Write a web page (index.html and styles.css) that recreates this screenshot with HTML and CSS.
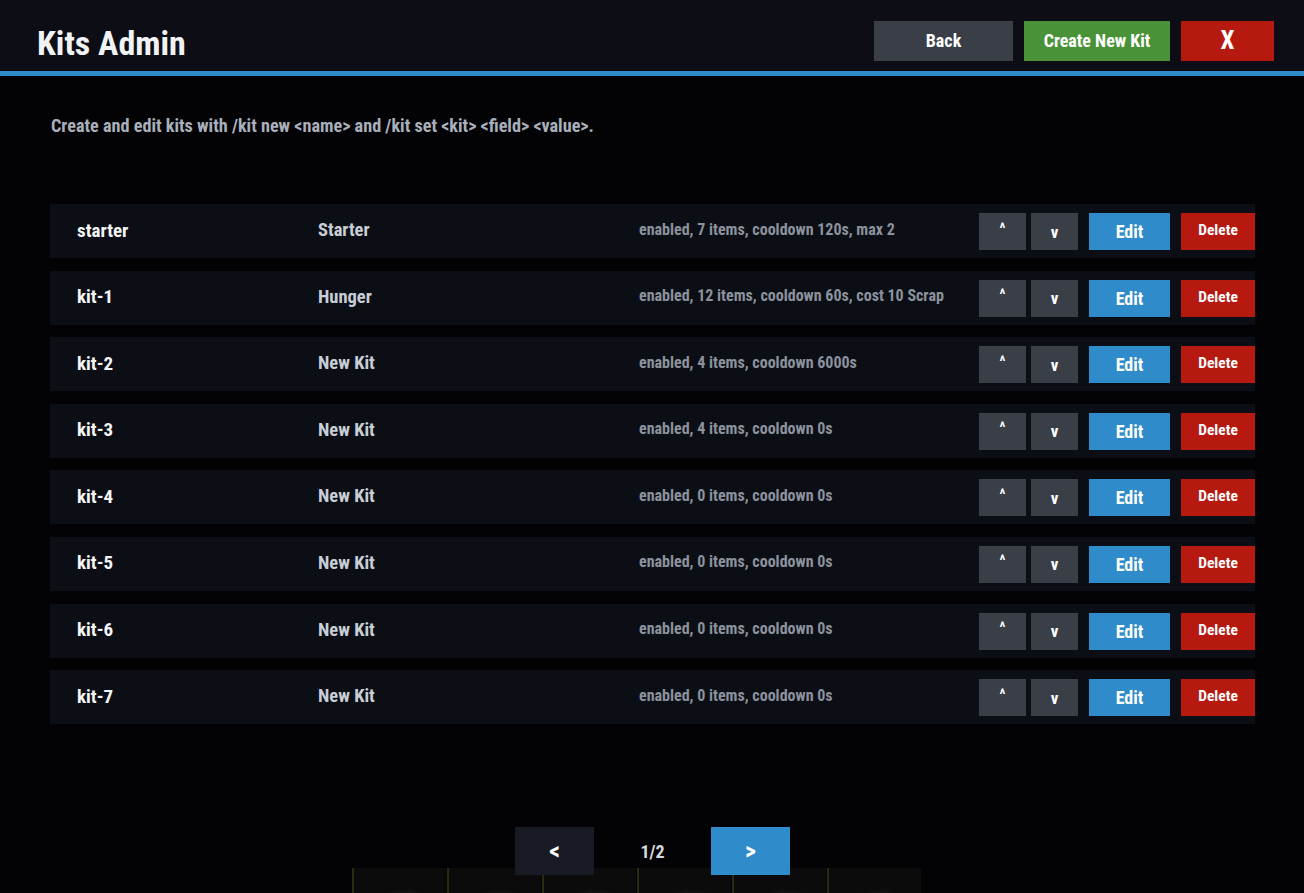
FILE: index.html
```html
<!DOCTYPE html>
<html lang="en">
<head>
  <meta charset="UTF-8" />
  <title>Kits Admin</title>
  <link rel="stylesheet" href="styles.css">
</head>
<body>
  <div id="panel">
    <div id="header">
      <div class="title">Kits Admin</div>
      <div class="header-btns">
        <button class="btn btn-back">Back</button>
        <button class="btn btn-create">Create New Kit</button>
        <button class="btn btn-close">X</button>
      </div>
    </div>

    <div class="hint">Create and edit kits with /kit new &lt;name&gt; and /kit set &lt;kit&gt; &lt;field&gt; &lt;value&gt;.</div>

    <div id="kit-list">
      <div class="kit-row">
        <div class="kit-key">starter</div>
        <div class="kit-name">Starter</div>
        <div class="kit-info">enabled, 7 items, cooldown 120s, max 2</div>
        <div class="row-btns">
          <button class="btn btn-move up">^</button>
          <button class="btn btn-move">v</button>
          <button class="btn btn-edit">Edit</button>
          <button class="btn btn-delete">Delete</button>
        </div>
      </div>
      <div class="kit-row">
        <div class="kit-key">kit-1</div>
        <div class="kit-name">Hunger</div>
        <div class="kit-info">enabled, 12 items, cooldown 60s, cost 10 Scrap</div>
        <div class="row-btns">
          <button class="btn btn-move up">^</button>
          <button class="btn btn-move">v</button>
          <button class="btn btn-edit">Edit</button>
          <button class="btn btn-delete">Delete</button>
        </div>
      </div>
      <div class="kit-row">
        <div class="kit-key">kit-2</div>
        <div class="kit-name">New Kit</div>
        <div class="kit-info">enabled, 4 items, cooldown 6000s</div>
        <div class="row-btns">
          <button class="btn btn-move up">^</button>
          <button class="btn btn-move">v</button>
          <button class="btn btn-edit">Edit</button>
          <button class="btn btn-delete">Delete</button>
        </div>
      </div>
      <div class="kit-row">
        <div class="kit-key">kit-3</div>
        <div class="kit-name">New Kit</div>
        <div class="kit-info">enabled, 4 items, cooldown 0s</div>
        <div class="row-btns">
          <button class="btn btn-move up">^</button>
          <button class="btn btn-move">v</button>
          <button class="btn btn-edit">Edit</button>
          <button class="btn btn-delete">Delete</button>
        </div>
      </div>
      <div class="kit-row">
        <div class="kit-key">kit-4</div>
        <div class="kit-name">New Kit</div>
        <div class="kit-info">enabled, 0 items, cooldown 0s</div>
        <div class="row-btns">
          <button class="btn btn-move up">^</button>
          <button class="btn btn-move">v</button>
          <button class="btn btn-edit">Edit</button>
          <button class="btn btn-delete">Delete</button>
        </div>
      </div>
      <div class="kit-row">
        <div class="kit-key">kit-5</div>
        <div class="kit-name">New Kit</div>
        <div class="kit-info">enabled, 0 items, cooldown 0s</div>
        <div class="row-btns">
          <button class="btn btn-move up">^</button>
          <button class="btn btn-move">v</button>
          <button class="btn btn-edit">Edit</button>
          <button class="btn btn-delete">Delete</button>
        </div>
      </div>
      <div class="kit-row">
        <div class="kit-key">kit-6</div>
        <div class="kit-name">New Kit</div>
        <div class="kit-info">enabled, 0 items, cooldown 0s</div>
        <div class="row-btns">
          <button class="btn btn-move up">^</button>
          <button class="btn btn-move">v</button>
          <button class="btn btn-edit">Edit</button>
          <button class="btn btn-delete">Delete</button>
        </div>
      </div>
      <div class="kit-row">
        <div class="kit-key">kit-7</div>
        <div class="kit-name">New Kit</div>
        <div class="kit-info">enabled, 0 items, cooldown 0s</div>
        <div class="row-btns">
          <button class="btn btn-move up">^</button>
          <button class="btn btn-move">v</button>
          <button class="btn btn-edit">Edit</button>
          <button class="btn btn-delete">Delete</button>
        </div>
      </div>
    </div>

    <div id="pager">
      <button class="btn btn-page prev">&lt;</button>
      <div class="page-num">1/2</div>
      <button class="btn btn-page next">&gt;</button>
    </div>
  </div>

  <!-- game hotbar peeking through at the bottom -->
  <div class="hotbar">
    <div class="slot"></div>
    <div class="slot"></div>
    <div class="slot"></div>
    <div class="slot"></div>
    <div class="slot"></div>
    <div class="slot"></div>
  </div>
</body>
</html>
```

FILE: styles.css
```css
body {
  margin: 0;
  height: 100vh;
  background: #030305;
  font-family: "Roboto Condensed", Roboto, "Liberation Sans", sans-serif;
  font-stretch: condensed;
  font-weight: bold;
  color: #f2f3f5;
  overflow: hidden;
  position: relative;
}

.btn {
  border: none;
  outline: none;
  font-family: inherit;
  font-stretch: inherit;
  font-weight: bold;
  color: #fff;
  cursor: pointer;
  padding: 0;
}

#header {
  height: 71px;
  background: #0d0e15;
  border-bottom: 5px solid #2f8bc9;
  display: flex;
  align-items: center;
  justify-content: space-between;
  padding: 0 30px 0 37px;
  box-sizing: content-box;
}

.title {
  font-size: 34px;
  margin-top: 15px;
}

.header-btns {
  display: flex;
  gap: 11px;
  margin-top: 10px;
}

.header-btns .btn {
  height: 40px;
  font-size: 18px;
}

.btn-back { width: 139px; background: #393e47; }
.btn-create { width: 146px; background: #4a9237; }
.btn-close { width: 93px; background: #b5190f; font-size: 25px !important; }

.hint {
  margin: 39px 0 0 51px;
  font-size: 18.2px;
  color: #a9b0bb;
}

#kit-list {
  margin: 68px 49px 0 50px;
  display: flex;
  flex-direction: column;
  gap: 12.6px;
}

.kit-row {
  height: 54px;
  background: #0c0e15;
  display: flex;
  align-items: center;
  padding-left: 27px;
}

.kit-key {
  width: 241px;
  font-size: 19px;
  color: #f4f5f7;
  margin-top: -2px;
}

.kit-name {
  width: 321px;
  font-size: 18.5px;
  color: #c8ced8;
  margin-top: -2px;
}

.kit-info {
  flex: 1;
  font-size: 16px;
  color: #8b929d;
  margin-top: -4px;
}

.row-btns {
  display: flex;
  height: 37px;
  margin-top: 1px;
}

.btn-move {
  width: 47px;
  background: #393e47;
  font-size: 17px;
  margin-right: 5px;
}

.btn-move.up {
  font-size: 15px;
  padding-bottom: 8px;
}

.btn-move + .btn-move {
  margin-right: 11px;
}

.btn-edit {
  width: 81px;
  background: #2f8bc9;
  font-size: 18px;
  margin-right: 11px;
}

.btn-delete {
  width: 74px;
  background: #b5190f;
  font-size: 15.5px;
  padding-bottom: 3px;
}

#pager {
  position: absolute;
  left: 515px;
  top: 827px;
  display: flex;
  align-items: center;
  z-index: 1;
}

.btn-page {
  width: 79px;
  height: 48px;
  font-size: 24px;
}

.prev { background: #181a24; }
.next { background: #2f8bc9; }

.page-num {
  width: 117px;
  text-align: center;
  font-size: 18px;
  color: #d6d9de;
}

.hotbar {
  position: absolute;
  left: 352px;
  top: 868px;
  display: flex;
  gap: 1px;
}

.slot {
  width: 92px;
  height: 40px;
  border-left: 2px solid #2a2c12;
  background: radial-gradient(ellipse 30px 20px at 55% 100%, #2b2b27, transparent), #0b0b0b;
}
```
